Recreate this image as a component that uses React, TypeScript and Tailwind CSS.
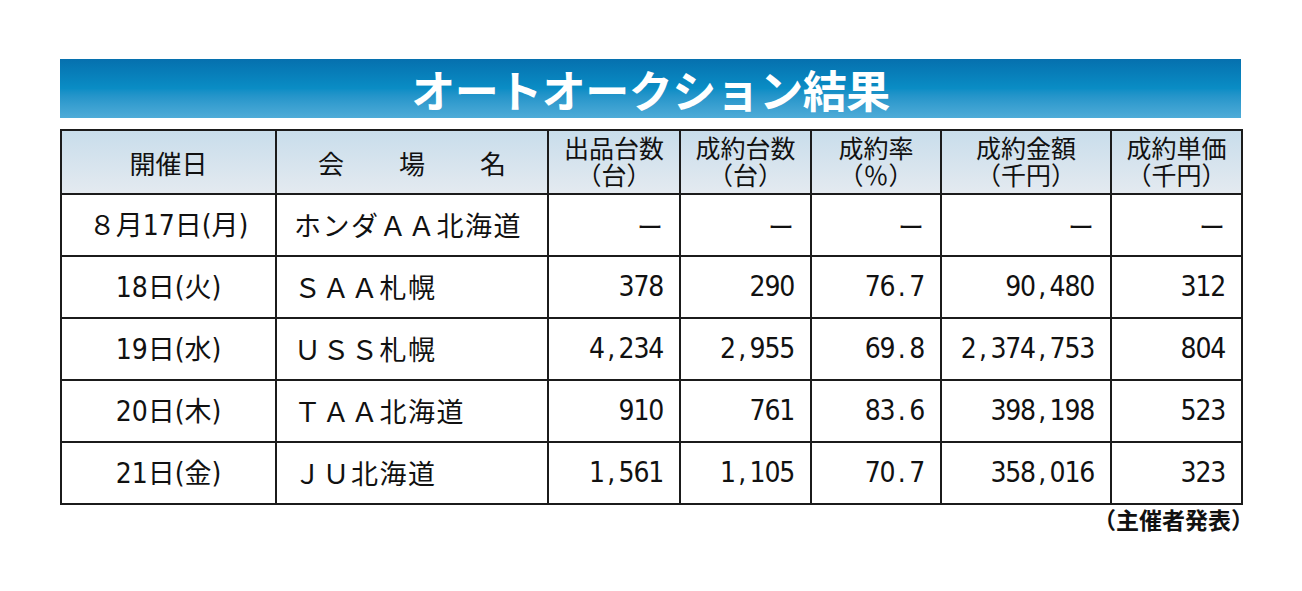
import React from "react";

const JP = "font-['Noto_Sans_CJK_JP','Noto_Sans',sans-serif]";
const NARROW = "font-['Liberation_Sans_Narrow','DejaVu_Sans_Condensed','Liberation_Sans',sans-serif]";

type Row = {
  day: string;
  mon?: string;
  wd: string;
  venue: string;
  vals: string[];
};

const rows: Row[] = [
  { mon: "８", day: "17", wd: "月", venue: "ホンダＡＡ北海道", vals: ["—", "—", "—", "—", "—"] },
  { day: "18", wd: "火", venue: "ＳＡＡ札幌", vals: ["378", "290", "76.7", "90,480", "312"] },
  { day: "19", wd: "水", venue: "ＵＳＳ札幌", vals: ["4,234", "2,955", "69.8", "2,374,753", "804"] },
  { day: "20", wd: "木", venue: "ＴＡＡ北海道", vals: ["910", "761", "83.6", "398,198", "523"] },
  { day: "21", wd: "金", venue: "ＪＵ北海道", vals: ["1,561", "1,105", "70.7", "358,016", "323"] },
];

const heads = [
  ["出品台数", "（台）"],
  ["成約台数", "（台）"],
  ["成約率", "（％）"],
  ["成約金額", "（千円）"],
  ["成約単価", "（千円）"],
];

const widths = ["w-[215px]", "w-[272px]", "w-[132px]", "w-[131px]", "w-[130px]", "w-[170px]", "w-[131px]"];

function Num({ value }: { value: string }) {
  if (value === "—") {
    return <span className={`${JP} text-[26px]`}>ー</span>;
  }
  return (
    <span className={`${NARROW} inline-flex text-[28px]`}>
      {value.split("").map((c, i) => (
        <span key={i} className="inline-block w-[14.8px] text-center">
          {c}
        </span>
      ))}
    </span>
  );
}

export default function App() {
  return (
    <div className="min-h-[591px] w-[1302px] bg-white pt-[59px] pl-[60px] text-[#111]">
      <div className="w-[1181px]">
        <div className="flex h-[59px] items-center justify-center bg-gradient-to-b from-[#0670ae] via-[#0a8dc5] to-[#4eacd8]">
          <h1 className={`${JP} text-[44px] font-bold leading-none tracking-[-0.5px] text-white`}>
            オートオークション結果
          </h1>
        </div>

        <table className="mt-[11px] w-[1181px] table-fixed border-collapse border-2 border-[#1b1b1b]">
          <thead>
            <tr className="h-[64px] bg-gradient-to-b from-[#c8ddeb] to-[#e4eaf0]">
              <th className={`${widths[0]} border-2 border-[#1b1b1b] ${JP} text-[26px] font-normal`}>開催日</th>
              <th className={`${widths[1]} border-2 border-[#1b1b1b] ${JP} text-[26px] font-normal`}>
                <div className="flex justify-center gap-[55px]">
                  <span>会</span>
                  <span>場</span>
                  <span>名</span>
                </div>
              </th>
              {heads.map((h, i) => (
                <th
                  key={h[0]}
                  className={`${widths[i + 2]} border-2 border-[#1b1b1b] ${JP} text-[25px] font-normal leading-[27px]`}
                >
                  <div className="-mt-[2px]">{h[0]}</div>
                  <div>{h[1]}</div>
                </th>
              ))}
            </tr>
          </thead>
          <tbody>
            {rows.map((r) => (
              <tr key={r.day} className="h-[62px]">
                <td className="border-2 border-[#1b1b1b] text-center">
                  <span className="inline-flex items-baseline">
                    {r.mon && <span className={`${JP} text-[27px]`}>{r.mon}月</span>}
                    <span className={`${NARROW} text-[28px]`}>{r.day}</span>
                    <span className={`${JP} text-[27px]`}>日</span>
                    <span className={`${NARROW} text-[28px]`}>(</span>
                    <span className={`${JP} text-[27px]`}>{r.wd}</span>
                    <span className={`${NARROW} text-[28px]`}>)</span>
                  </span>
                </td>
                <td className={`border-2 border-[#1b1b1b] pl-[17px] ${JP} text-[27px] tracking-[1.5px]`}>
                  {r.venue}
                </td>
                {r.vals.map((v, i) => (
                  <td key={i} className="border-2 border-[#1b1b1b] pr-[16px] text-right">
                    <Num value={v} />
                  </td>
                ))}
              </tr>
            ))}
          </tbody>
        </table>

        <div className={`mr-[-13px] mt-[3px] text-right ${JP} text-[23px] font-bold leading-none`}>（主催者発表）</div>
      </div>
    </div>
  );
}
